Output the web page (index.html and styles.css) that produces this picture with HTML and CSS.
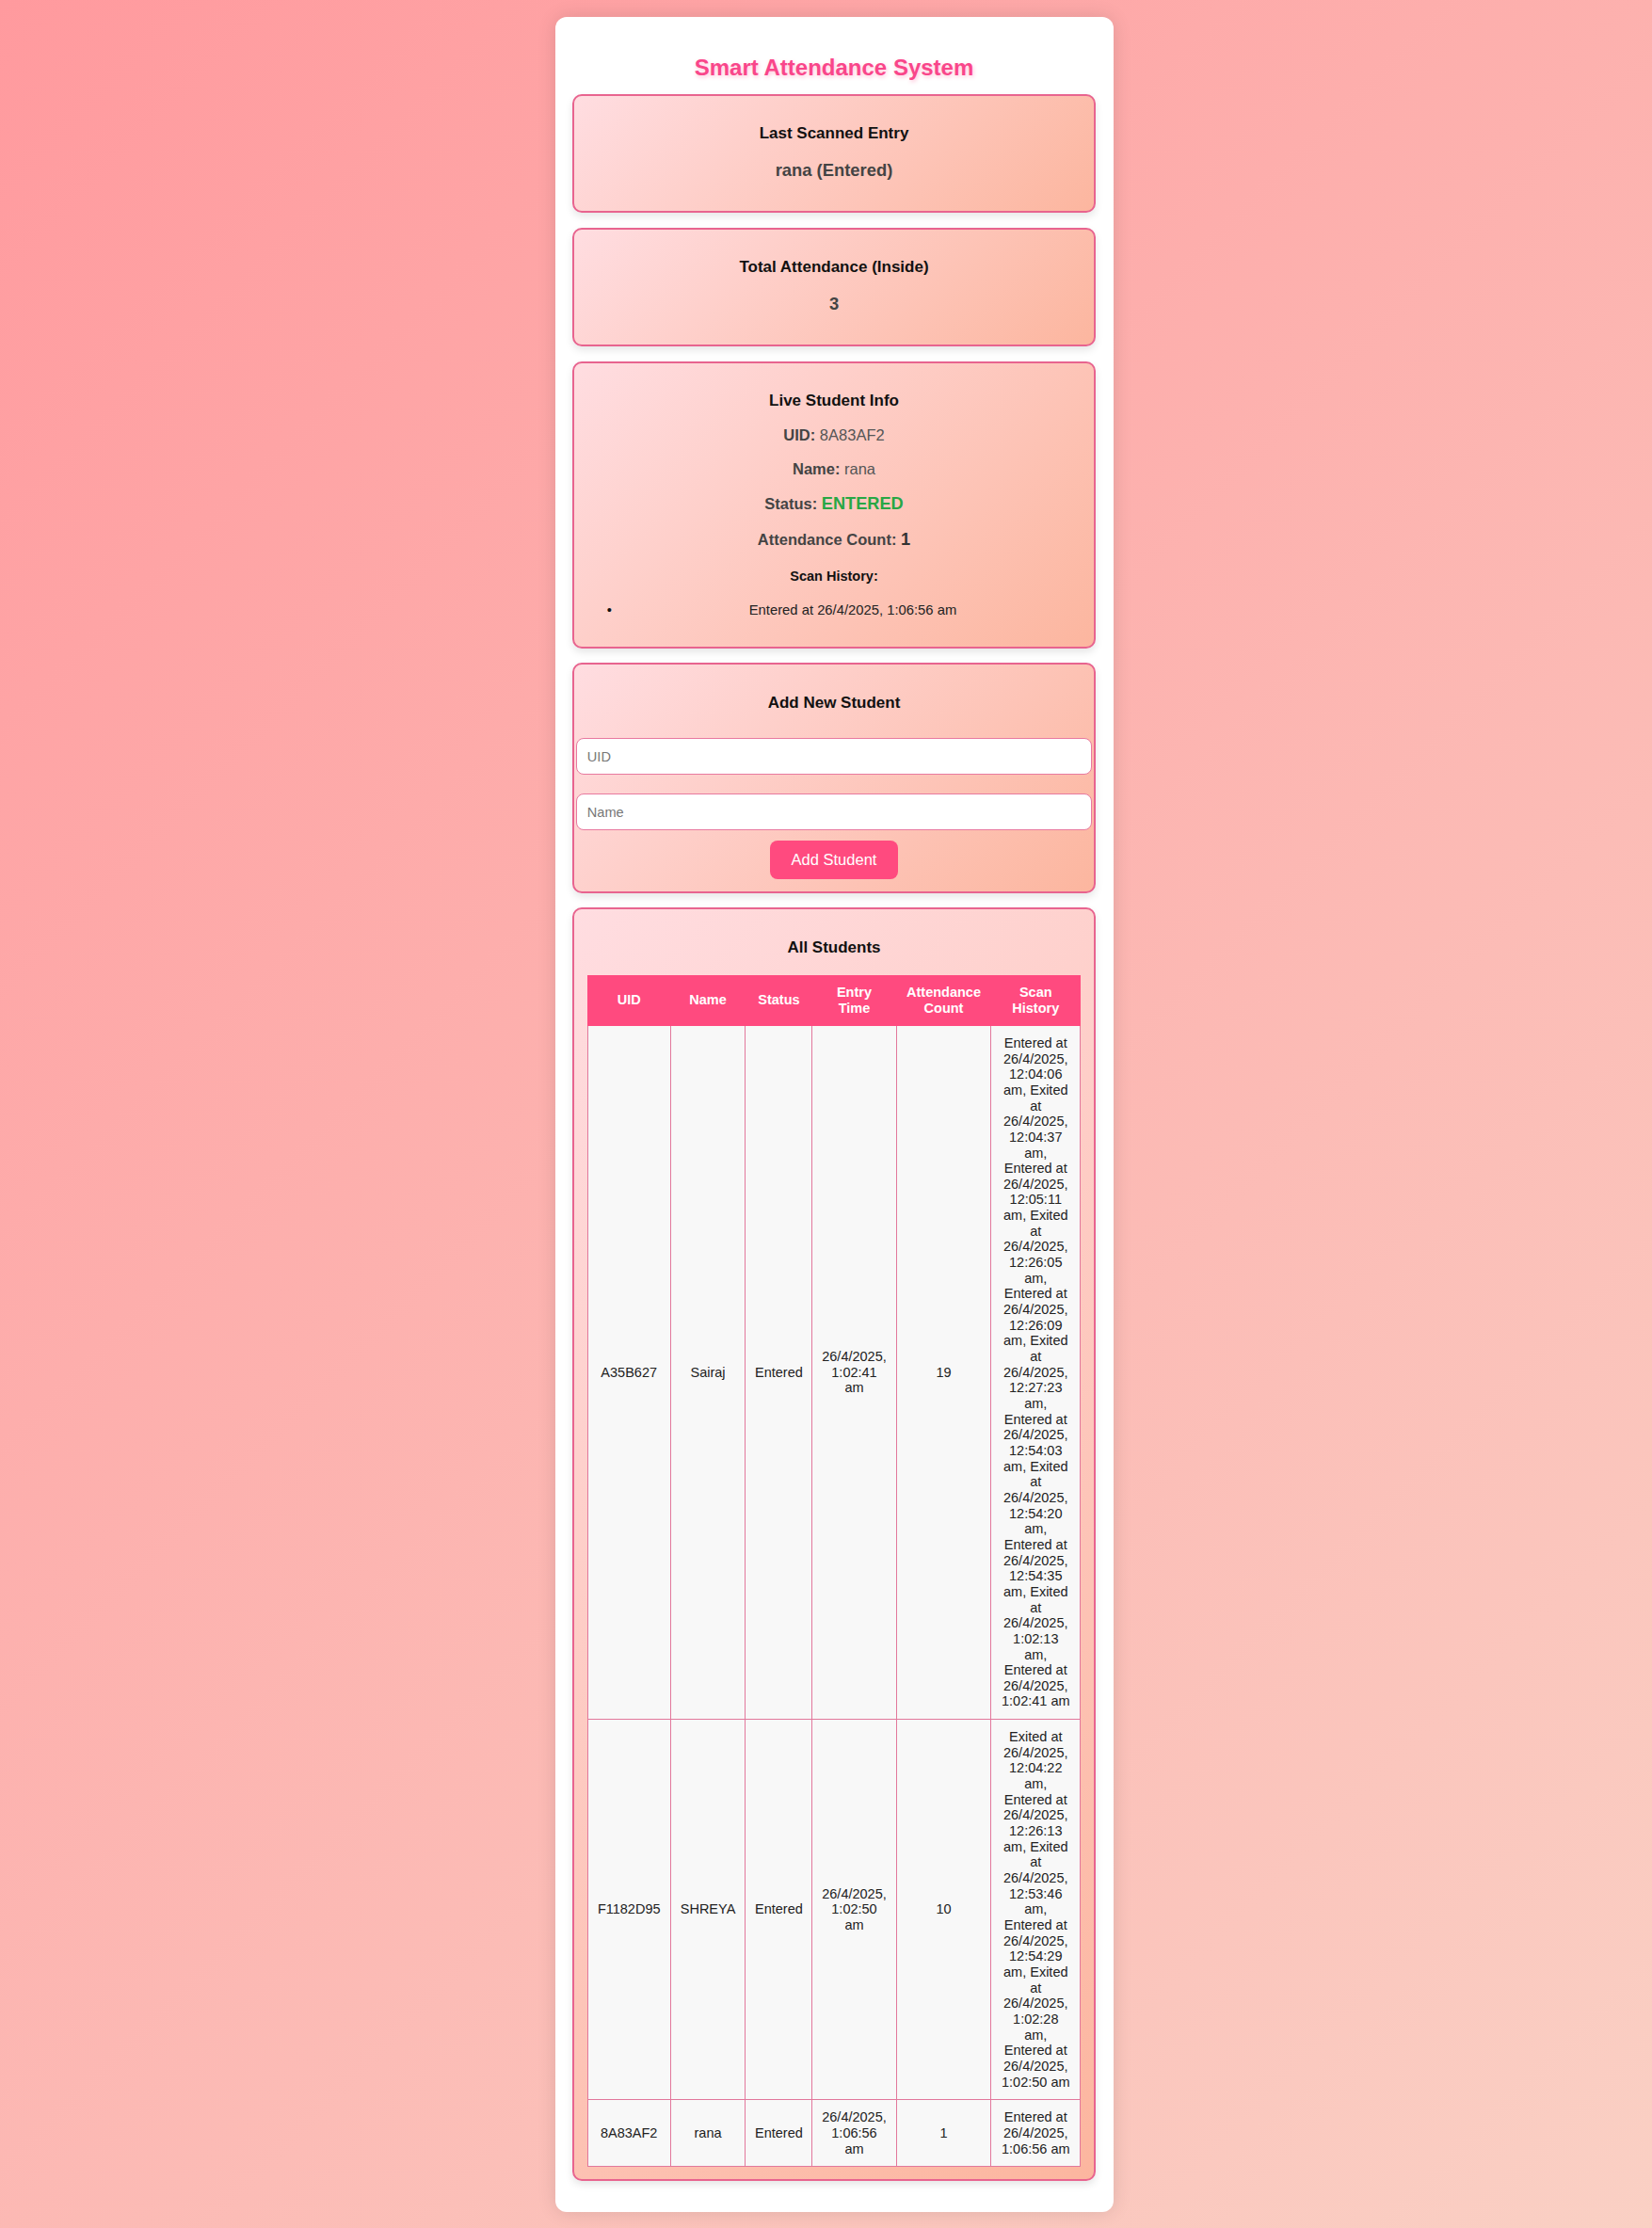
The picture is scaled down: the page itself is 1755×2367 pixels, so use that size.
FILE: index.html
```html
<!DOCTYPE html>
<html lang="en">
<head>
<meta charset="utf-8">
<title>Smart Attendance System</title>
<link rel="stylesheet" href="styles.css">
</head>
<body>
<div class="container">
  <h1 class="title">Smart Attendance System</h1>

  <div class="card">
    <h3>Last Scanned Entry</h3>
    <p class="value">rana (Entered)</p>
  </div>

  <div class="card">
    <h3>Total Attendance (Inside)</h3>
    <p class="value">3</p>
  </div>

  <div class="card">
    <h3>Live Student Info</h3>
    <p class="info"><strong>UID:</strong> 8A83AF2</p>
    <p class="info"><strong>Name:</strong> rana</p>
    <p class="info"><strong>Status:</strong> <span class="status-in">ENTERED</span></p>
    <p class="info"><strong>Attendance Count:</strong> <span class="count">1</span></p>
    <h4>Scan History:</h4>
    <ul class="history">
      <li>Entered at 26/4/2025, 1:06:56 am</li>
    </ul>
  </div>

  <div class="card">
    <h3>Add New Student</h3>
    <div class="form">
      <input class="field field-uid" type="text" placeholder="UID">
      <input class="field field-name" type="text" placeholder="Name">
      <button class="btn" type="button">Add Student</button>
    </div>
  </div>

  <div class="card card-last">
    <h3>All Students</h3>
    <table class="students">
      <colgroup>
        <col class="c-uid">
        <col class="c-name">
        <col class="c-status">
        <col class="c-entry">
        <col class="c-count">
        <col class="c-hist">
      </colgroup>
      <thead>
        <tr>
          <th>UID</th>
          <th>Name</th>
          <th>Status</th>
          <th>Entry Time</th>
          <th>Attendance Count</th>
          <th>Scan History</th>
        </tr>
      </thead>
      <tbody>
        <tr>
          <td>A35B627</td>
          <td>Sairaj</td>
          <td>Entered</td>
          <td>26/4/2025, 1:02:41 am</td>
          <td>19</td>
          <td>Entered at 26/4/2025, 12:04:06 am, Exited at 26/4/2025, 12:04:37 am, Entered at 26/4/2025, 12:05:11 am, Exited at 26/4/2025, 12:26:05 am, Entered at 26/4/2025, 12:26:09 am, Exited at 26/4/2025, 12:27:23 am, Entered at 26/4/2025, 12:54:03 am, Exited at 26/4/2025, 12:54:20 am, Entered at 26/4/2025, 12:54:35 am, Exited at 26/4/2025, 1:02:13 am, Entered at 26/4/2025, 1:02:41 am</td>
        </tr>
        <tr>
          <td>F1182D95</td>
          <td>SHREYA</td>
          <td>Entered</td>
          <td>26/4/2025, 1:02:50 am</td>
          <td>10</td>
          <td>Exited at 26/4/2025, 12:04:22 am, Entered at 26/4/2025, 12:26:13 am, Exited at 26/4/2025, 12:53:46 am, Entered at 26/4/2025, 12:54:29 am, Exited at 26/4/2025, 1:02:28 am, Entered at 26/4/2025, 1:02:50 am</td>
        </tr>
        <tr>
          <td>8A83AF2</td>
          <td>rana</td>
          <td>Entered</td>
          <td>26/4/2025, 1:06:56 am</td>
          <td>1</td>
          <td>Entered at 26/4/2025, 1:06:56 am</td>
        </tr>
      </tbody>
    </table>
  </div>
</div>
</body>
</html>
```

FILE: styles.css
```css
html {
  min-height: 100%;
  background: linear-gradient(135deg, #ff9a9e 0%, #fad0c4 100%);
}

body {
  margin: 0;
  padding: 18px 0 19px 18px;
  font-family: "Liberation Sans", Arial, Helvetica, sans-serif;
  font-size: 16.5px;
  line-height: 1.149;
  color: #222;
}

.container {
  box-sizing: border-box;
  width: 593px;
  margin: 0 auto;
  padding: 22px 19px 17.5px 18px;
  background: #ffffff;
  border-radius: 12px;
  box-shadow: 0 0 20px rgba(0, 0, 0, 0.12);
}

.title {
  margin: 17.5px 0 14.5px;
  font-size: 24px;
  font-weight: bold;
  text-align: center;
  color: #f9468a;
  text-shadow: 1px 2px 4px rgba(255, 64, 129, 0.3);
}

.card {
  margin-bottom: 15.5px;
  padding: 13.5px 0 13px;
  border: 2px solid #e8648f;
  border-radius: 10px;
  background: linear-gradient(135deg, #ffdde1 0%, #fcb69f 100%);
  box-shadow: 0 4px 8px rgba(0, 0, 0, 0.1);
  text-align: center;
}

.card h3 {
  margin: 17px 0;
  font-size: 17px;
  font-weight: bold;
  color: #111;
}

.value {
  margin: 18.4px 0 20px;
  font-size: 18.4px;
  font-weight: bold;
  color: #444;
}

.info {
  margin: 17px 0;
  color: #555;
}

.info strong {
  color: #444;
}

.status-in {
  font-size: 18.2px;
  font-weight: bold;
  color: #28a745;
}

.count {
  font-size: 18.2px;
  font-weight: bold;
  color: #333;
}

.card h4 {
  margin: 21px 0 19.3px;
  font-size: 14.5px;
  font-weight: bold;
  color: #111;
}

.history {
  margin: 14.8px 0 16.5px;
  padding-left: 40px;
  font-size: 14.8px;
  color: #222;
}

.history li::marker {
  content: "\2022";
  color: #111;
}

.form {
  display: flex;
  flex-direction: column;
  align-items: center;
  padding-top: 11px;
}

.field {
  width: 95%;
  height: 37px;
  padding: 0 11px;
  border: 1px solid #e8799f;
  border-radius: 8px;
  background: #fff;
  font-family: "Liberation Sans", Arial, Helvetica, sans-serif;
  font-size: 14.6px;
  color: #222;
}

.field::placeholder {
  color: #777;
}

.field-uid {
  margin-bottom: 20px;
}

.field-name {
  margin-bottom: 10.6px;
}

.btn {
  padding: 10.8px 22.5px;
  border: none;
  border-radius: 8px;
  background: #ff4a7f;
  color: #fff;
  font-family: "Liberation Sans", Arial, Helvetica, sans-serif;
  font-size: 16.5px;
  line-height: 1.149;
}

.students {
  width: 95%;
  margin: 19.5px auto 0;
  border-collapse: collapse;
  table-layout: fixed;
  font-size: 14.5px;
}

.c-uid { width: 16.78%; }
.c-name { width: 15.26%; }
.c-status { width: 13.54%; }
.c-entry { width: 17.07%; }
.c-count { width: 19.24%; }
.c-hist { width: 18.11%; }

.students th {
  padding: 9.5px 9px;
  border: 1px solid #ff4a7f;
  background: #ff4a7f;
  color: #fff;
  font-weight: bold;
}

.students td {
  padding: 10px 9px;
  border: 1px solid #e2789c;
  background: #f8f8f8;
  color: #222;
  text-align: center;
  vertical-align: middle;
}
```
